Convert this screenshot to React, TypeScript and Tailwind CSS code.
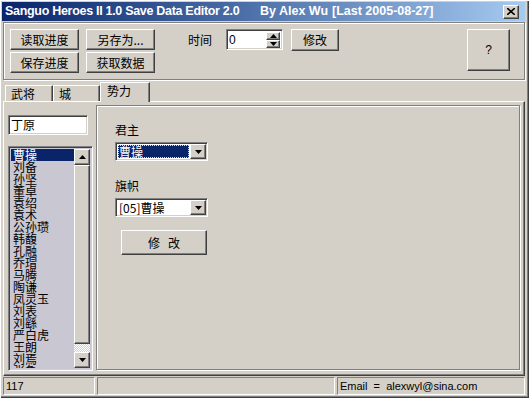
import type { ReactNode } from "react"

const raised =
  "border border-t-white border-l-white border-r-[#404040] border-b-[#404040] shadow-[inset_-1px_-1px_0_#808080] bg-[#d4d0c8]"
const sunken =
  "border border-t-[#808080] border-l-[#808080] border-r-white border-b-white shadow-[inset_1px_1px_0_#404040,inset_-1px_-1px_0_#d4d0c8]"
const pane = "border border-t-[#808080] border-l-[#808080] border-r-white border-b-white"

const cjk = "font-['Noto_Sans_CJK_SC',sans-serif]"
const latin = "font-['Liberation_Sans','Noto_Sans_CJK_SC',sans-serif]"

const RULERS = [
  "曹操",
  "刘备",
  "孙坚",
  "董卓",
  "袁绍",
  "袁术",
  "公孙瓒",
  "韩馥",
  "孔融",
  "乔瑁",
  "马腾",
  "陶谦",
  "凤灵玉",
  "刘表",
  "刘繇",
  "严白虎",
  "王朗",
  "刘焉",
  "张鲁"
]

function Button({ children, className = "" }: { children: ReactNode; className?: string }) {
  return (
    <div
      className={`${raised} flex items-center justify-center text-[12px] leading-[12px] text-black ${cjk} ${className}`}
    >
      {children}
    </div>
  )
}

function Arrow({ up = false }: { up?: boolean }) {
  return (
    <svg width="7" height="4" viewBox="0 0 7 4">
      <path d={up ? "M3.5 0 L7 4 L0 4 Z" : "M0 0 L7 0 L3.5 4 Z"} fill="black" />
    </svg>
  )
}

function Combo({ value, selected = false }: { value: string; selected?: boolean }) {
  return (
    <div className={`${sunken} w-[93px] h-[19px] bg-white flex p-[1px]`}>
      <div className="flex-1 flex items-center p-px">
        {selected ? (
          <div
            className={`w-full h-full bg-[#0a246a] text-white outline-1 outline-dotted outline-[#f0e070] -outline-offset-1 text-[12px] leading-[12px] pl-px flex items-center ${cjk}`}
          >
            {value}
          </div>
        ) : (
          <div className={`text-[12px] leading-[12px] pl-px text-black ${cjk}`}>{value}</div>
        )}
      </div>
      <div className={`${raised} w-[16px] h-full flex items-center justify-center`}>
        <Arrow />
      </div>
    </div>
  )
}

export default function App() {
  return (
    <div className="w-[529px] h-[398px] bg-[#d4d0c8] flex flex-col pl-[2px] pr-[4px] pt-[2px] overflow-hidden shadow-[inset_1px_1px_0_white,inset_-1px_-1px_0_#404040,inset_-2px_-2px_0_#808080]">
      {/* title bar */}
      <div className="h-[19px] bg-gradient-to-r from-[#0a246a] to-[#a6caf0] flex items-center pl-[3px] pr-[6px] text-white font-bold text-[12.5px] font-['Liberation_Sans',sans-serif] whitespace-pre">
        <span className="w-[255px] shrink-0 tracking-[-0.3px]">Sanguo Heroes II 1.0 Save Data Editor 2.0</span>
        <span className="w-[72px] shrink-0">By Alex Wu</span>
        <span className="shrink-0">[Last 2005-08-27]</span>
        <div className={`${raised} ml-auto w-[16px] h-[14px] flex items-center justify-center`}>
          <svg width="8" height="7" viewBox="0 0 8 7">
            <path d="M0 0 L8 7 M8 0 L0 7" stroke="black" strokeWidth="1.6" />
          </svg>
        </div>
      </div>

      {/* top toolbar group */}
      <div className="mt-px ml-px h-[58px] border border-[#808080] shadow-[inset_1px_1px_0_white,1px_1px_0_white] flex items-start pl-[6px] pt-[6px]">
        <div className="flex flex-col gap-[2px]">
          <Button className="w-[69px] h-[21px]">读取进度</Button>
          <Button className="w-[69px] h-[21px]">保存进度</Button>
        </div>
        <div className="flex flex-col gap-[2px] ml-[7px]">
          <Button className="w-[69px] h-[21px]">另存为...</Button>
          <Button className="w-[69px] h-[21px]">获取数据</Button>
        </div>
        <div className={`ml-[33px] h-[21px] flex items-center text-[12px] text-black ${cjk}`}>时间</div>
        <div className={`${sunken} ml-[14px] w-[57px] h-[21px] bg-white flex items-center pl-[2px] pr-[2px]`}>
          <span className={`flex-1 text-[12px] leading-[12px] text-black ${latin}`}>0</span>
          <div className="flex flex-col">
            <div className={`${raised} w-[14px] h-[8px] flex items-center justify-center`}>
              <Arrow up />
            </div>
            <div className={`${raised} w-[14px] h-[8px] flex items-center justify-center`}>
              <Arrow />
            </div>
          </div>
        </div>
        <Button className="ml-[8px] w-[48px] h-[22px]">修改</Button>
        <div className={`${raised} ml-[128px] w-[43px] h-[42px] flex items-center justify-center text-[12px] text-black ${latin}`}>
          ?
        </div>
      </div>

      {/* tabs */}
      <div className={`h-[21px] flex items-end pl-[3px] text-[12px] leading-[12px] text-black ${cjk}`}>
        <div className="w-[48px] h-[16px] border-t border-l border-t-white border-l-white border-r border-r-[#404040] shadow-[inset_-1px_0_0_#808080] pl-[5px] pt-[2px]">
          武将
        </div>
        <div className="w-[47px] h-[16px] border-t border-l border-t-white border-l-white border-r border-r-[#404040] shadow-[inset_-1px_0_0_#808080] pl-[5px] pt-[2px]">
          城
        </div>
        <div className="relative z-10 -mb-px w-[50px] h-[20px] bg-[#d4d0c8] border-t border-l border-t-white border-l-white border-r border-r-[#404040] shadow-[inset_-1px_0_0_#808080] pl-[6px] pt-[2px]">
          势力
        </div>
      </div>

      {/* tab panel */}
      <div className="ml-px h-[275px] border border-t-white border-l-white border-r-[#404040] border-b-[#404040] shadow-[inset_-1px_-1px_0_#808080] flex">
        <div className="w-[89px] flex flex-col pl-[4px] pt-[13px]">
          <div className={`${sunken} w-[80px] h-[20px] bg-white flex items-center pl-[2px] text-[12px] leading-[12px] text-black ${cjk}`}>
            丁原
          </div>
          <div className={`${sunken} mt-[11px] w-[85px] h-[225px] bg-[#c9c7d1] flex p-[2px]`}>
            <div className={`flex-1 overflow-hidden flex flex-col text-[12px] leading-[12px] text-black ${cjk}`}>
              {RULERS.map((name, i) => (
                <div
                  key={name}
                  className={
                    i === 0
                      ? "h-[12px] shrink-0 bg-[#0a246a] text-white pl-[2px]"
                      : "h-[12px] shrink-0 pl-[2px]"
                  }
                >
                  {name}
                </div>
              ))}
            </div>
            <div className="w-[16px] flex flex-col">
              <div className={`${raised} h-[16px] shrink-0 flex items-center justify-center`}>
                <Arrow up />
              </div>
              <div className={`${raised} h-[179px] shrink-0`} />
              <div className="flex-1 bg-[repeating-conic-gradient(#d4d0c8_0_25%,white_0_50%)] bg-[length:2px_2px]" />
              <div className={`${raised} h-[16px] shrink-0 flex items-center justify-center`}>
                <Arrow />
              </div>
            </div>
          </div>
        </div>

        <div className="ml-[3px] mt-[3px] mr-[2px] w-[424px] h-[265px] border border-[#808080] shadow-[inset_1px_1px_0_white,1px_1px_0_white] flex flex-col pl-[18px]">
          <div className={`mt-[18px] h-[12px] text-[12px] leading-[12px] text-black ${cjk}`}>君主</div>
          <div className="mt-[6px]">
            <Combo value="曹操" selected />
          </div>
          <div className={`mt-[19px] h-[12px] text-[12px] leading-[12px] text-black ${cjk}`}>旗帜</div>
          <div className="mt-[6px]">
            <Combo value="[05]曹操" />
          </div>
          <Button className="mt-[13px] ml-[6px] w-[86px] h-[25px] whitespace-pre">修   改</Button>
        </div>
      </div>

      {/* status bar */}
      <div className={`mt-px ml-px h-[18px] flex gap-[2px] text-[11px] leading-[11px] text-black ${latin}`}>
        <div className={`${pane} w-[92px] flex items-center pl-[2px]`}>117</div>
        <div className={`${pane} w-[238px]`} />
        <div className={`${pane} flex-1 flex items-center pl-[2px] whitespace-pre`}>Email  =  alexwyl@sina.com</div>
      </div>
    </div>
  )
}
